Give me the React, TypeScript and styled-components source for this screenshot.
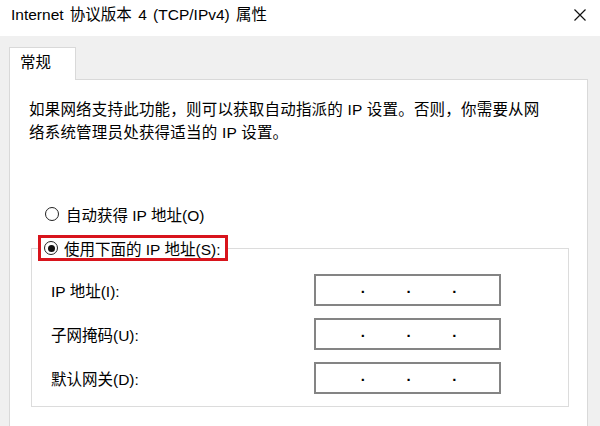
import React from 'react'
import styled, { createGlobalStyle } from 'styled-components'

const GlobalStyle = createGlobalStyle`
    html, body {
        margin: 0;
        padding: 0;
    }
    body {
        width: 600px;
        height: 426px;
        overflow: hidden;
        background: #fff;
        color: #000;
        font-family: "Liberation Sans", "Noto Sans CJK SC", sans-serif;
    }
`

const Window = styled.div`
    display: flex;
    flex-direction: column;
    height: 426px;
`

const TitleBar = styled.div`
    height: 36px;
    box-sizing: border-box;
    padding: 5px 13px 0 11px;
    display: flex;
    justify-content: space-between;
    align-items: flex-start;
    background: #fff;
`

const Title = styled.div`
    font-size: 15.5px;
    line-height: 20px;
    word-spacing: 2px;
`

const CloseButton = styled.div`
    width: 14px;
    height: 20px;
    display: flex;
    align-items: center;
    justify-content: center;
`

const Body = styled.div`
    flex: 1;
    display: flex;
    flex-direction: column;
    background: #f0f0f0;
    padding: 11px 12px 0 9px;
`

const TabStrip = styled.div`
    display: flex;
`

const Tab = styled.div`
    width: 67px;
    height: 33px;
    box-sizing: border-box;
    border: 1px solid #d9d9d9;
    border-bottom: none;
    background: #fff;
    padding-left: 10px;
    font-size: 15.5px;
    line-height: 30px;
    margin-bottom: -1px;
    position: relative;
    z-index: 1;
`

const Panel = styled.div`
    flex: 1;
    background: #fff;
    border: 1px solid #d9d9d9;
    border-bottom: none;
    padding: 18px 19px 0 19px;
`

const Intro = styled.p`
    margin: 0;
    font-size: 15.5px;
    line-height: 23px;
    letter-spacing: 0.2px;
`

const Options = styled.div`
    margin-top: 60px;
`

const RadioRow = styled.label`
    display: flex;
    align-items: center;
    gap: 7px;
    height: 20px;
    padding-left: 16px;
    font-size: 15.5px;
`

const RadioMark = styled.span<{ checked?: boolean }>`
    width: 14px;
    height: 14px;
    box-sizing: border-box;
    border: 1px solid #222;
    border-radius: 50%;
    background: #fff;
    display: flex;
    align-items: center;
    justify-content: center;
    flex-shrink: 0;

    &::after {
        content: '';
        display: ${({ checked }) => (checked ? 'block' : 'none')};
        width: 7px;
        height: 7px;
        border-radius: 50%;
        background: #111;
    }
`

const GroupBox = styled.fieldset`
    margin: 11px 0 0 2px;
    width: 538px;
    min-width: 0;
    box-sizing: border-box;
    border: 1px solid #dcdcdc;
    padding: 13px 0 12px 6px;
`

const Legend = styled.legend`
    padding: 0;
`

const Highlight = styled.span`
    display: flex;
    align-items: center;
    gap: 6px;
    height: 26px;
    box-sizing: border-box;
    border: 3px solid #d8141c;
    padding: 0 5px 0 3px;
    font-size: 15.5px;
`

const Fields = styled.div`
    display: flex;
    flex-direction: column;
    gap: 12px;
`

const FieldRow = styled.div`
    display: flex;
    align-items: center;
    padding-left: 13px;
`

const FieldLabel = styled.span`
    width: 263px;
    font-size: 15.5px;
`

const IpBox = styled.div`
    width: 187px;
    height: 32px;
    box-sizing: border-box;
    border: 2px solid #848484;
    padding-left: 2px;
    display: flex;
    align-items: center;
    background: #fff;
`

const Octet = styled.span`
    width: 44px;
`

const Dot = styled.span`
    width: 2px;
    display: flex;
    justify-content: center;
    font-size: 15px;
    font-weight: bold;
    line-height: 20px;
    margin-top: -4px;
`

const fields = ['IP 地址(I):', '子网掩码(U):', '默认网关(D):']

const IpInput = () => (
    <IpBox>
        <Octet />
        <Dot>.</Dot>
        <Octet />
        <Dot>.</Dot>
        <Octet />
        <Dot>.</Dot>
        <Octet />
    </IpBox>
)

const App = () => {
    return (
        <Window>
            <GlobalStyle />
            <TitleBar>
                <Title>Internet 协议版本 4 (TCP/IPv4) 属性</Title>
                <CloseButton>
                    <svg width="12" height="12" viewBox="0 0 12 12">
                        <path d="M0.5 0.5L11.5 11.5M11.5 0.5L0.5 11.5" stroke="#111" strokeWidth="1.2" />
                    </svg>
                </CloseButton>
            </TitleBar>

            <Body>
                <TabStrip>
                    <Tab>常规</Tab>
                </TabStrip>
                <Panel>
                    <Intro>
                        如果网络支持此功能，则可以获取自动指派的 IP 设置。否则，你需要从网
                        <br />
                        络系统管理员处获得适当的 IP 设置。
                    </Intro>

                    <Options>
                        <RadioRow>
                            <RadioMark />
                            自动获得 IP 地址(O)
                        </RadioRow>

                        <GroupBox>
                            <Legend>
                                <Highlight>
                                    <RadioMark checked />
                                    使用下面的 IP 地址(S):
                                </Highlight>
                            </Legend>
                            <Fields>
                                {fields.map((f) => (
                                    <FieldRow key={f}>
                                        <FieldLabel>{f}</FieldLabel>
                                        <IpInput />
                                    </FieldRow>
                                ))}
                            </Fields>
                        </GroupBox>
                    </Options>
                </Panel>
            </Body>
        </Window>
    )
}

export default App
